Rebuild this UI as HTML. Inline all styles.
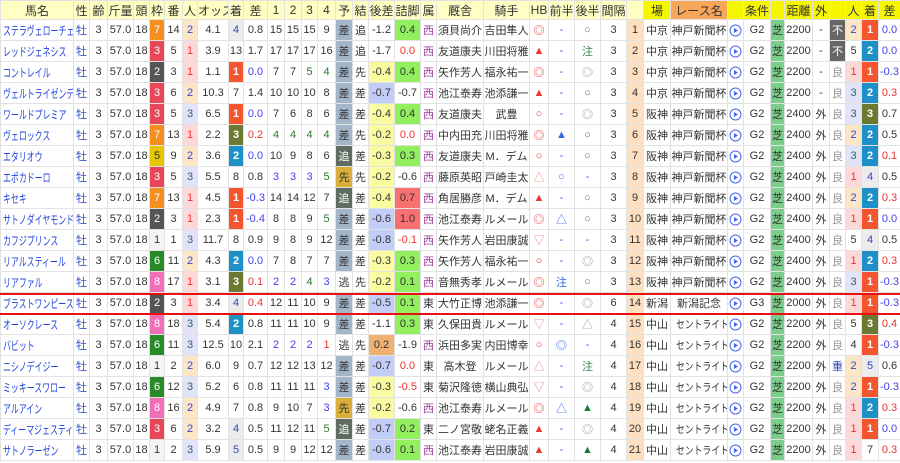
<!DOCTYPE html>
<html><head><meta charset="utf-8">
<style>
*{margin:0;padding:0;box-sizing:border-box}
body{width:900px;height:463px;background:#fff;overflow:hidden;position:relative;font-family:"Liberation Sans","Noto Sans CJK JP",sans-serif;font-size:11px;color:#333}
table{border-collapse:collapse;table-layout:fixed;width:900px}
td,th{border:1px solid #e2e2e2;text-align:center;white-space:nowrap;overflow:hidden;padding:0;font-weight:normal}
th{height:19px;background:#ffffc4;font-size:12px;color:#333}
th.y{background:#f6f600}
th.o{background:#f7a75a}
td{height:21px}
td.n{text-align:left;color:#2244dd;padding-left:2px}
td.n span{display:inline-block;font-size:12px;transform:scaleX(.66);transform-origin:left center}
.sx{color:#3355cc}
.w1{background:#f4f4f4}
.w2{background:#555;color:#fff}
.w3{background:#e8475a;color:#fff}
.w5{background:#e6c700;color:#333}
.w6{background:#2a8a2a;color:#fff}
.w7{background:#f59020;color:#fff}
.w8{background:#f070b8;color:#fff}
.p1{background:#fdd8d8;color:#e33}
.p2{background:#fde6c6;color:#3344dd}
.p3{background:#e2e2f8;color:#2a6a5a}
.r1{background:#f4552f;color:#fff;font-weight:bold}
.r2{background:#1e90c8;color:#fff;font-weight:bold}
.r3{background:#6b7a30;color:#fff;font-weight:bold}
.rg{background:#ececec;color:#3344cc}
.b{color:#4040f0}
.rd{color:#f03030}
.g{color:#2a7a2a}
.ys{background:#a3b5c9;color:#333}
.yo{background:#5f6b63;color:#fff}
.yk{background:#d9ae3a;color:#333}
.ky{background:#fafaa0}
.kb{background:#c2cdf8}
.ko{background:#f0b070}
.tg{background:#92f060}
.tr{background:#f87070}
.ws{color:#a040a0}
.hr{color:#e33}
.hp{color:#f08080}
.fb{color:#3366ee}
.bg{color:#3a8a5a}
.gy{color:#999}
.pc{background:#fde0c0}
.sh{background:#7ccc8c}
.fu{background:#666;color:#fff}
.ic svg{display:block;margin:auto}
.ct{text-align:left;padding-left:5px}
.ct span{display:inline-block;transform:scaleX(.8);transform-origin:left center}
.line{position:absolute;left:0;width:900px;height:2px;background:#e81010}
</style></head><body>
<table>
<colgroup>
<col style="width:73px"><col style="width:16px"><col style="width:18px"><col style="width:26px"><col style="width:16px"><col style="width:15px"><col style="width:18px"><col style="width:15px"><col style="width:31px"><col style="width:15px"><col style="width:24px"><col style="width:17px"><col style="width:17px"><col style="width:16px"><col style="width:18px"><col style="width:17px"><col style="width:16px"><col style="width:26px"><col style="width:26px"><col style="width:16px"><col style="width:47px"><col style="width:46px"><col style="width:19px"><col style="width:26px"><col style="width:26px"><col style="width:26px"><col style="width:17px"><col style="width:27px"><col style="width:57px"><col style="width:16px"><col style="width:27px"><col style="width:14px"><col style="width:28px"><col style="width:17px"><col style="width:16px"><col style="width:16px"><col style="width:17px"><col style="width:22px">
</colgroup>
<tr><th>馬名</th><th>性</th><th>齢</th><th>斤量</th><th>頭</th><th>枠</th><th>番</th><th>人</th><th>オッズ</th><th>着</th><th>差</th><th>1</th><th>2</th><th>3</th><th>4</th><th>予</th><th>結</th><th>後差</th><th>詰脚</th><th>属</th><th>厩舎</th><th>騎手</th><th>HB</th><th>前半</th><th>後半</th><th>間隔</th><th></th><th class="y">場</th><th class="o">レース名</th><th class="y"></th><th class="y">条件</th><th class="y"></th><th class="y">距離</th><th class="y">外</th><th class="y"></th><th class="y">人</th><th class="y">着</th><th class="y">差</th></tr>
<tr><td class="n"><span>ステラヴェローチェ</span></td><td class="sx">牡</td><td>3</td><td>57.0</td><td>18</td><td class="w7">7</td><td>14</td><td class="p2">2</td><td>4.1</td><td class="rg">4</td><td>0.8</td><td>15</td><td>15</td><td>15</td><td>9</td><td class="ys">差</td><td>追</td><td>-1.2</td><td class="tg">0.4</td><td class="ws">西</td><td>須貝尚介</td><td>吉田隼人</td><td class="hr">◎</td><td class="fb">-</td><td class="bg">○</td><td>3</td><td class="pc">1</td><td>中京</td><td>神戸新聞杯</td><td class="ic"><svg width="13" height="13"><circle cx="6.5" cy="6.5" r="5.5" fill="none" stroke="#4466ee"/><path d="M5 4v5l4-2.5z" fill="#4466ee"/></svg></td><td>G2</td><td class="sh">芝</td><td>2200</td><td>-</td><td class="fu">不</td><td class="p2">2</td><td class="r1">1</td><td class="b">0.0</td></tr>
<tr><td class="n"><span>レッドジェネシス</span></td><td class="sx">牡</td><td>3</td><td>57.0</td><td>18</td><td class="w3">3</td><td>5</td><td class="p1">1</td><td>3.9</td><td>13</td><td>1.7</td><td>17</td><td>17</td><td>17</td><td>16</td><td class="ys">差</td><td>追</td><td>-1.7</td><td class="rd">0.0</td><td class="ws">西</td><td>友道康夫</td><td>川田将雅</td><td class="hr">▲</td><td class="fb">-</td><td class="bg">注</td><td>3</td><td class="pc">2</td><td>中京</td><td>神戸新聞杯</td><td class="ic"><svg width="13" height="13"><circle cx="6.5" cy="6.5" r="5.5" fill="none" stroke="#4466ee"/><path d="M5 4v5l4-2.5z" fill="#4466ee"/></svg></td><td>G2</td><td class="sh">芝</td><td>2200</td><td>-</td><td class="fu">不</td><td>5</td><td class="r2">2</td><td class="b">0.0</td></tr>
<tr><td class="n"><span>コントレイル</span></td><td class="sx">牡</td><td>3</td><td>57.0</td><td>18</td><td class="w2">2</td><td>3</td><td class="p1">1</td><td>1.1</td><td class="r1">1</td><td class="b">0.0</td><td>7</td><td>7</td><td class="g">5</td><td class="g">4</td><td class="ys">差</td><td>先</td><td class="ky">-0.4</td><td class="tg">0.4</td><td class="ws">西</td><td>矢作芳人</td><td>福永祐一</td><td class="hr">◎</td><td class="fb">-</td><td class="gy">◎</td><td>3</td><td class="pc">3</td><td>中京</td><td>神戸新聞杯</td><td class="ic"><svg width="13" height="13"><circle cx="6.5" cy="6.5" r="5.5" fill="none" stroke="#4466ee"/><path d="M5 4v5l4-2.5z" fill="#4466ee"/></svg></td><td>G2</td><td class="sh">芝</td><td>2200</td><td>-</td><td class="gy">良</td><td class="p1">1</td><td class="r1">1</td><td class="b">-0.3</td></tr>
<tr><td class="n"><span>ヴェルトライゼンデ</span></td><td class="sx">牡</td><td>3</td><td>57.0</td><td>18</td><td class="w3">3</td><td>6</td><td class="p2">2</td><td>10.3</td><td>7</td><td>1.4</td><td>10</td><td>10</td><td>10</td><td>8</td><td class="ys">差</td><td>差</td><td class="kb">-0.7</td><td>-0.7</td><td class="ws">西</td><td>池江泰寿</td><td>池添謙一</td><td class="hr">▲</td><td class="fb">-</td><td class="bg">○</td><td>3</td><td class="pc">4</td><td>中京</td><td>神戸新聞杯</td><td class="ic"><svg width="13" height="13"><circle cx="6.5" cy="6.5" r="5.5" fill="none" stroke="#4466ee"/><path d="M5 4v5l4-2.5z" fill="#4466ee"/></svg></td><td>G2</td><td class="sh">芝</td><td>2200</td><td>-</td><td class="gy">良</td><td class="p3">3</td><td class="r2">2</td><td class="rd">0.3</td></tr>
<tr><td class="n"><span>ワールドプレミア</span></td><td class="sx">牡</td><td>3</td><td>57.0</td><td>18</td><td class="w3">3</td><td>5</td><td class="p3">3</td><td>6.5</td><td class="r1">1</td><td class="b">0.0</td><td>7</td><td>6</td><td>8</td><td>6</td><td class="ys">差</td><td>差</td><td class="ky">-0.4</td><td class="tg">0.4</td><td class="ws">西</td><td>友道康夫</td><td>武豊</td><td class="hr">○</td><td class="fb">-</td><td class="gy">◎</td><td>3</td><td class="pc">5</td><td>阪神</td><td>神戸新聞杯</td><td class="ic"><svg width="13" height="13"><circle cx="6.5" cy="6.5" r="5.5" fill="none" stroke="#4466ee"/><path d="M5 4v5l4-2.5z" fill="#4466ee"/></svg></td><td>G2</td><td class="sh">芝</td><td>2400</td><td>外</td><td class="gy">良</td><td class="p3">3</td><td class="r3">3</td><td>0.7</td></tr>
<tr><td class="n"><span>ヴェロックス</span></td><td class="sx">牡</td><td>3</td><td>57.0</td><td>18</td><td class="w7">7</td><td>13</td><td class="p1">1</td><td>2.2</td><td class="r3">3</td><td class="rd">0.2</td><td class="g">4</td><td class="g">4</td><td class="g">4</td><td class="g">4</td><td class="ys">差</td><td>先</td><td class="ky">-0.2</td><td class="rd">0.0</td><td class="ws">西</td><td>中内田充</td><td>川田将雅</td><td class="hr">◎</td><td class="fb">▲</td><td class="bg">○</td><td>3</td><td class="pc">6</td><td>阪神</td><td>神戸新聞杯</td><td class="ic"><svg width="13" height="13"><circle cx="6.5" cy="6.5" r="5.5" fill="none" stroke="#4466ee"/><path d="M5 4v5l4-2.5z" fill="#4466ee"/></svg></td><td>G2</td><td class="sh">芝</td><td>2400</td><td>外</td><td class="gy">良</td><td class="p2">2</td><td class="r2">2</td><td>0.5</td></tr>
<tr><td class="n"><span>エタリオウ</span></td><td class="sx">牡</td><td>3</td><td>57.0</td><td>18</td><td class="w5">5</td><td>9</td><td class="p2">2</td><td>3.6</td><td class="r2">2</td><td class="b">0.0</td><td>10</td><td>9</td><td>8</td><td>6</td><td class="yo">追</td><td>差</td><td class="ky">-0.3</td><td class="tg">0.3</td><td class="ws">西</td><td>友道康夫</td><td>M．デム</td><td class="hr">○</td><td class="fb">-</td><td class="bg">○</td><td>3</td><td class="pc">7</td><td>阪神</td><td>神戸新聞杯</td><td class="ic"><svg width="13" height="13"><circle cx="6.5" cy="6.5" r="5.5" fill="none" stroke="#4466ee"/><path d="M5 4v5l4-2.5z" fill="#4466ee"/></svg></td><td>G2</td><td class="sh">芝</td><td>2400</td><td>外</td><td class="gy">良</td><td class="p3">3</td><td class="r2">2</td><td class="rd">0.1</td></tr>
<tr><td class="n"><span>エポカドーロ</span></td><td class="sx">牡</td><td>3</td><td>57.0</td><td>18</td><td class="w3">3</td><td>5</td><td class="p3">3</td><td>5.5</td><td>8</td><td>0.8</td><td class="b">3</td><td class="b">3</td><td class="b">3</td><td class="g">5</td><td class="yk">先</td><td>先</td><td class="ky">-0.2</td><td>-0.6</td><td class="ws">西</td><td>藤原英昭</td><td>戸崎圭太</td><td class="hp">△</td><td class="fb">○</td><td class="fb">-</td><td>3</td><td class="pc">8</td><td>阪神</td><td>神戸新聞杯</td><td class="ic"><svg width="13" height="13"><circle cx="6.5" cy="6.5" r="5.5" fill="none" stroke="#4466ee"/><path d="M5 4v5l4-2.5z" fill="#4466ee"/></svg></td><td>G2</td><td class="sh">芝</td><td>2400</td><td>外</td><td class="gy">良</td><td class="p1">1</td><td class="rg">4</td><td>0.5</td></tr>
<tr><td class="n"><span>キセキ</span></td><td class="sx">牡</td><td>3</td><td>57.0</td><td>18</td><td class="w7">7</td><td>13</td><td class="p1">1</td><td>4.5</td><td class="r1">1</td><td class="b">-0.3</td><td>14</td><td>14</td><td>12</td><td>7</td><td class="yo">追</td><td>差</td><td class="ky">-0.4</td><td class="tr">0.7</td><td class="ws">西</td><td>角居勝彦</td><td>M．デム</td><td class="hr">▲</td><td class="fb">-</td><td class="bg">○</td><td>3</td><td class="pc">9</td><td>阪神</td><td>神戸新聞杯</td><td class="ic"><svg width="13" height="13"><circle cx="6.5" cy="6.5" r="5.5" fill="none" stroke="#4466ee"/><path d="M5 4v5l4-2.5z" fill="#4466ee"/></svg></td><td>G2</td><td class="sh">芝</td><td>2400</td><td>外</td><td class="gy">良</td><td class="p2">2</td><td class="r2">2</td><td class="rd">0.3</td></tr>
<tr><td class="n"><span>サトノダイヤモンド</span></td><td class="sx">牡</td><td>3</td><td>57.0</td><td>18</td><td class="w2">2</td><td>3</td><td class="p1">1</td><td>2.3</td><td class="r1">1</td><td class="b">-0.4</td><td>8</td><td>8</td><td>9</td><td class="g">5</td><td class="ys">差</td><td>差</td><td class="kb">-0.6</td><td class="tr">1.0</td><td class="ws">西</td><td>池江泰寿</td><td>ルメール</td><td class="hr">◎</td><td class="fb">△</td><td class="bg">○</td><td>3</td><td class="pc">10</td><td>阪神</td><td>神戸新聞杯</td><td class="ic"><svg width="13" height="13"><circle cx="6.5" cy="6.5" r="5.5" fill="none" stroke="#4466ee"/><path d="M5 4v5l4-2.5z" fill="#4466ee"/></svg></td><td>G2</td><td class="sh">芝</td><td>2400</td><td>外</td><td class="gy">良</td><td class="p1">1</td><td class="r1">1</td><td class="b">0.0</td></tr>
<tr><td class="n"><span>カフジプリンス</span></td><td class="sx">牡</td><td>3</td><td>57.0</td><td>18</td><td class="w1">1</td><td>1</td><td class="p3">3</td><td>11.7</td><td>8</td><td>0.9</td><td>9</td><td>8</td><td>9</td><td>12</td><td class="ys">差</td><td>差</td><td class="kb">-0.8</td><td class="rd">-0.1</td><td class="ws">西</td><td>矢作芳人</td><td>岩田康誠</td><td class="hp">▽</td><td class="fb">-</td><td class="fb">-</td><td>3</td><td class="pc">11</td><td>阪神</td><td>神戸新聞杯</td><td class="ic"><svg width="13" height="13"><circle cx="6.5" cy="6.5" r="5.5" fill="none" stroke="#4466ee"/><path d="M5 4v5l4-2.5z" fill="#4466ee"/></svg></td><td>G2</td><td class="sh">芝</td><td>2400</td><td>外</td><td class="gy">良</td><td>5</td><td class="rg">4</td><td>0.5</td></tr>
<tr><td class="n"><span>リアルスティール</span></td><td class="sx">牡</td><td>3</td><td>57.0</td><td>18</td><td class="w6">6</td><td>11</td><td class="p2">2</td><td>4.3</td><td class="r2">2</td><td class="b">0.0</td><td>7</td><td>8</td><td>7</td><td>7</td><td class="ys">差</td><td>差</td><td class="ky">-0.3</td><td class="tg">0.3</td><td class="ws">西</td><td>矢作芳人</td><td>福永祐一</td><td class="hr">○</td><td class="fb">-</td><td class="gy">◎</td><td>3</td><td class="pc">12</td><td>阪神</td><td>神戸新聞杯</td><td class="ic"><svg width="13" height="13"><circle cx="6.5" cy="6.5" r="5.5" fill="none" stroke="#4466ee"/><path d="M5 4v5l4-2.5z" fill="#4466ee"/></svg></td><td>G2</td><td class="sh">芝</td><td>2400</td><td>外</td><td class="gy">良</td><td class="p1">1</td><td class="r2">2</td><td class="rd">0.3</td></tr>
<tr><td class="n"><span>リアファル</span></td><td class="sx">牡</td><td>3</td><td>57.0</td><td>18</td><td class="w8">8</td><td>17</td><td class="p1">1</td><td>3.1</td><td class="r3">3</td><td class="rd">0.1</td><td class="b">2</td><td class="b">2</td><td class="g">4</td><td class="b">3</td><td>逃</td><td>先</td><td class="ky">-0.2</td><td class="tg">0.1</td><td class="ws">西</td><td>音無秀孝</td><td>ルメール</td><td class="hr">◎</td><td class="fb">注</td><td class="bg">○</td><td>3</td><td class="pc">13</td><td>阪神</td><td>神戸新聞杯</td><td class="ic"><svg width="13" height="13"><circle cx="6.5" cy="6.5" r="5.5" fill="none" stroke="#4466ee"/><path d="M5 4v5l4-2.5z" fill="#4466ee"/></svg></td><td>G2</td><td class="sh">芝</td><td>2400</td><td>外</td><td class="gy">良</td><td class="p3">3</td><td class="r1">1</td><td class="b">-0.3</td></tr>
<tr><td class="n"><span>ブラストワンピース</span></td><td class="sx">牡</td><td>3</td><td>57.0</td><td>18</td><td class="w2">2</td><td>3</td><td class="p1">1</td><td>3.4</td><td class="rg">4</td><td class="rd">0.4</td><td>12</td><td>11</td><td>10</td><td>9</td><td class="ys">差</td><td>差</td><td class="kb">-0.5</td><td class="tg">0.1</td><td>東</td><td>大竹正博</td><td>池添謙一</td><td class="hr">◎</td><td class="fb">-</td><td class="gy">◎</td><td>6</td><td class="pc">14</td><td>新潟</td><td>新潟記念</td><td class="ic"><svg width="13" height="13"><circle cx="6.5" cy="6.5" r="5.5" fill="none" stroke="#4466ee"/><path d="M5 4v5l4-2.5z" fill="#4466ee"/></svg></td><td>G3</td><td class="sh">芝</td><td>2000</td><td>外</td><td class="gy">良</td><td class="p1">1</td><td class="r1">1</td><td class="b">-0.3</td></tr>
<tr><td class="n"><span>オーソクレース</span></td><td class="sx">牡</td><td>3</td><td>57.0</td><td>18</td><td class="w8">8</td><td>18</td><td class="p3">3</td><td>5.4</td><td class="r2">2</td><td>0.8</td><td>11</td><td>11</td><td>10</td><td>9</td><td class="ys">差</td><td>差</td><td>-1.1</td><td class="tg">0.3</td><td>東</td><td>久保田貴</td><td>ルメール</td><td class="hp">▽</td><td class="fb">-</td><td class="gy">△</td><td>4</td><td class="pc">15</td><td>中山</td><td class="ct"><span>セントライト</span></td><td class="ic"><svg width="13" height="13"><circle cx="6.5" cy="6.5" r="5.5" fill="none" stroke="#4466ee"/><path d="M5 4v5l4-2.5z" fill="#4466ee"/></svg></td><td>G2</td><td class="sh">芝</td><td>2200</td><td>外</td><td class="gy">良</td><td>5</td><td class="r3">3</td><td class="rd">0.4</td></tr>
<tr><td class="n"><span>バビット</span></td><td class="sx">牡</td><td>3</td><td>57.0</td><td>18</td><td class="w6">6</td><td>11</td><td class="p3">3</td><td>12.5</td><td>10</td><td>2.1</td><td class="b">2</td><td class="b">2</td><td class="b">2</td><td class="rd">1</td><td>逃</td><td>先</td><td class="ko">0.2</td><td>-1.9</td><td class="ws">西</td><td>浜田多実</td><td>内田博幸</td><td class="hr">○</td><td class="fb">◎</td><td class="fb">-</td><td>4</td><td class="pc">16</td><td>中山</td><td class="ct"><span>セントライト</span></td><td class="ic"><svg width="13" height="13"><circle cx="6.5" cy="6.5" r="5.5" fill="none" stroke="#4466ee"/><path d="M5 4v5l4-2.5z" fill="#4466ee"/></svg></td><td>G2</td><td class="sh">芝</td><td>2200</td><td>外</td><td class="gy">良</td><td>4</td><td class="r1">1</td><td class="b">-0.3</td></tr>
<tr><td class="n"><span>ニシノデイジー</span></td><td class="sx">牡</td><td>3</td><td>57.0</td><td>18</td><td class="w1">1</td><td>2</td><td class="p2">2</td><td>6.0</td><td>9</td><td>0.7</td><td>12</td><td>12</td><td>13</td><td>12</td><td class="ys">差</td><td>差</td><td class="kb">-0.7</td><td class="rd">0.0</td><td>東</td><td>高木登</td><td>ルメール</td><td class="hp">△</td><td class="fb">-</td><td class="bg">注</td><td>4</td><td class="pc">17</td><td>中山</td><td class="ct"><span>セントライト</span></td><td class="ic"><svg width="13" height="13"><circle cx="6.5" cy="6.5" r="5.5" fill="none" stroke="#4466ee"/><path d="M5 4v5l4-2.5z" fill="#4466ee"/></svg></td><td>G2</td><td class="sh">芝</td><td>2200</td><td>外</td><td style="color:#3344aa">重</td><td class="p2">2</td><td class="rg">5</td><td>0.6</td></tr>
<tr><td class="n"><span>ミッキースワロー</span></td><td class="sx">牡</td><td>3</td><td>57.0</td><td>18</td><td class="w6">6</td><td>12</td><td class="p3">3</td><td>5.2</td><td>6</td><td>0.8</td><td>11</td><td>11</td><td>11</td><td class="b">3</td><td class="ys">差</td><td>差</td><td class="ky">-0.3</td><td class="rd">-0.5</td><td>東</td><td>菊沢隆徳</td><td>横山典弘</td><td class="hp">▽</td><td class="fb">-</td><td class="gy">◎</td><td>4</td><td class="pc">18</td><td>中山</td><td class="ct"><span>セントライト</span></td><td class="ic"><svg width="13" height="13"><circle cx="6.5" cy="6.5" r="5.5" fill="none" stroke="#4466ee"/><path d="M5 4v5l4-2.5z" fill="#4466ee"/></svg></td><td>G2</td><td class="sh">芝</td><td>2200</td><td>外</td><td class="gy">良</td><td class="p2">2</td><td class="r1">1</td><td class="b">-0.3</td></tr>
<tr><td class="n"><span>アルアイン</span></td><td class="sx">牡</td><td>3</td><td>57.0</td><td>18</td><td class="w8">8</td><td>16</td><td class="p2">2</td><td>4.9</td><td>7</td><td>0.8</td><td>9</td><td>10</td><td>7</td><td class="b">3</td><td class="yk">先</td><td>差</td><td class="ky">-0.2</td><td>-0.6</td><td class="ws">西</td><td>池江泰寿</td><td>ルメール</td><td class="hr">◎</td><td class="fb">△</td><td style="color:#1a7a3a">▲</td><td>4</td><td class="pc">19</td><td>中山</td><td class="ct"><span>セントライト</span></td><td class="ic"><svg width="13" height="13"><circle cx="6.5" cy="6.5" r="5.5" fill="none" stroke="#4466ee"/><path d="M5 4v5l4-2.5z" fill="#4466ee"/></svg></td><td>G2</td><td class="sh">芝</td><td>2200</td><td>外</td><td class="gy">良</td><td class="p1">1</td><td class="r2">2</td><td class="rd">0.3</td></tr>
<tr><td class="n"><span>ディーマジェスティ</span></td><td class="sx">牡</td><td>3</td><td>57.0</td><td>18</td><td class="w3">3</td><td>6</td><td class="p2">2</td><td>3.2</td><td class="rg">4</td><td>0.5</td><td>11</td><td>12</td><td>11</td><td class="g">5</td><td class="yo">追</td><td>差</td><td class="kb">-0.7</td><td class="tg">0.2</td><td>東</td><td>二ノ宮敬</td><td>蛯名正義</td><td class="hr">▲</td><td class="fb">-</td><td class="gy">◎</td><td>4</td><td class="pc">20</td><td>中山</td><td class="ct"><span>セントライト</span></td><td class="ic"><svg width="13" height="13"><circle cx="6.5" cy="6.5" r="5.5" fill="none" stroke="#4466ee"/><path d="M5 4v5l4-2.5z" fill="#4466ee"/></svg></td><td>G2</td><td class="sh">芝</td><td>2200</td><td>外</td><td class="gy">良</td><td class="p1">1</td><td class="r1">1</td><td class="b">0.0</td></tr>
<tr><td class="n"><span>サトノラーゼン</span></td><td class="sx">牡</td><td>3</td><td>57.0</td><td>18</td><td class="w1">1</td><td>2</td><td class="p3">3</td><td>5.9</td><td class="rg">5</td><td>0.5</td><td>9</td><td>9</td><td>12</td><td>12</td><td class="ys">差</td><td>差</td><td class="kb">-0.6</td><td class="tg">0.1</td><td class="ws">西</td><td>池江泰寿</td><td>岩田康誠</td><td class="hr">▲</td><td class="fb">-</td><td style="color:#1a7a3a">▲</td><td>4</td><td class="pc">21</td><td>中山</td><td class="ct"><span>セントライト</span></td><td class="ic"><svg width="13" height="13"><circle cx="6.5" cy="6.5" r="5.5" fill="none" stroke="#4466ee"/><path d="M5 4v5l4-2.5z" fill="#4466ee"/></svg></td><td>G2</td><td class="sh">芝</td><td>2200</td><td>外</td><td class="gy">良</td><td class="p1">1</td><td>7</td><td class="rd">0.3</td></tr>
</table>
<div class="line" style="top:293px"></div>
<div class="line" style="top:313px"></div>
</body></html>
